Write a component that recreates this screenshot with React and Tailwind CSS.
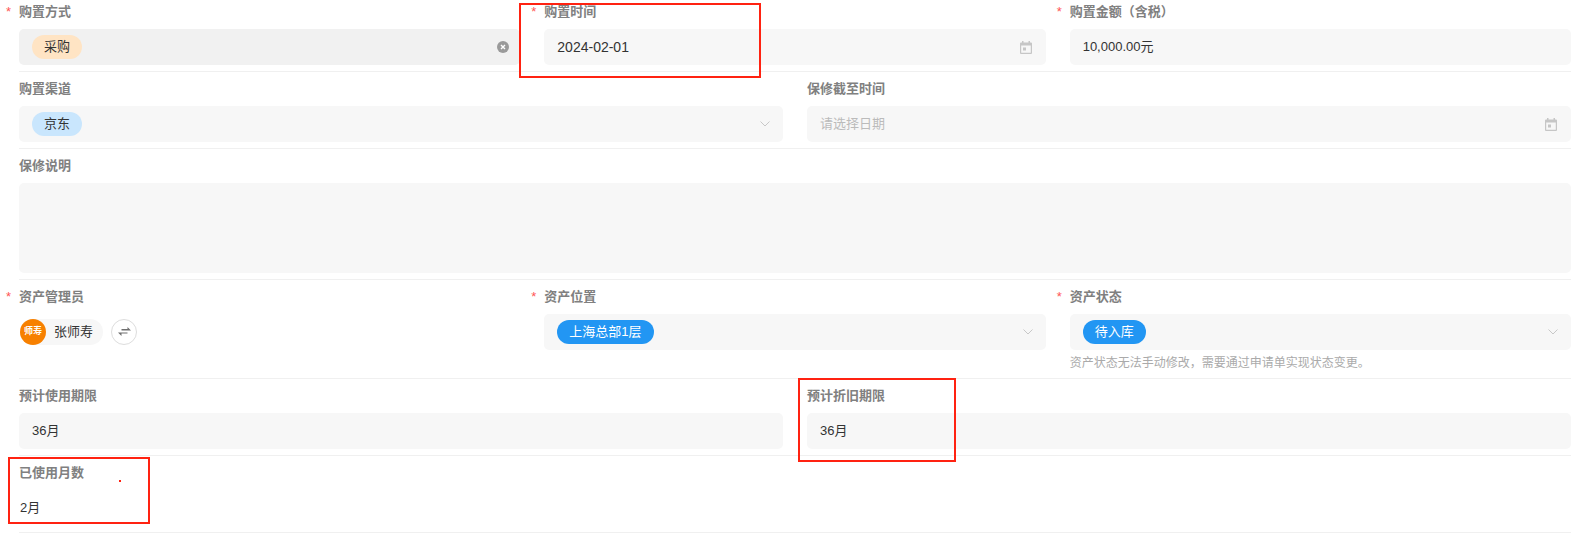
const font = { fontFamily: '"Liberation Sans", "Noto Sans CJK SC", sans-serif' };

function Label({ children, required }) {
  return (
    <div className="h-[22px] mb-[6px] flex items-center text-[13px] font-bold text-[#808080] leading-[22px]">
      {required && <span className="w-[13px] -ml-[13px] text-[#f55] text-[13px] font-normal">*</span>}
      {children}
    </div>
  );
}

function Pill({ children, className }) {
  return <span className={`h-[24px] px-[12px] rounded-full flex items-center text-[13px] ${className}`}>{children}</span>;
}

function Chevron() {
  return (
    <svg width="12" height="8" viewBox="0 0 12 8" fill="none" stroke="#c8c8c8" strokeWidth="1" className="shrink-0 mr-[12px]">
      <path d="M1.5 1.5 6 6l4.5-4.500" />
    </svg>
  );
}

function Calendar() {
  return (
    <svg width="12" height="13" viewBox="0 0 12 13" className="shrink-0 mr-[14px]">
      <path fill="#c6c6c6" d="M2 0h1.500v1.500h5V0H10v1.500h1a1 1 0 0 1 1 1V12a1 1 0 0 1-1 1H1a1 1 0 0 1-1-1V2.500a1 1 0 0 1 1-1h1zM1.200 4.500V11.800h9.600V4.500z" />
      <rect x="3" y="6.500" width="3" height="3" fill="#c6c6c6" />
    </svg>
  );
}

function Clear() {
  return (
    <svg width="12" height="12" viewBox="0 0 12 12" className="shrink-0 mr-[11px]">
      <circle cx="6" cy="6" r="6" fill="#9a9a9a" />
      <path d="M4 4l4 4M8 4l-4 4" stroke="#fff" strokeWidth="1.400" />
    </svg>
  );
}

function Field({ children, className = "bg-[#f7f7f7]" }) {
  return <div className={`h-[36px] pl-[13px] rounded-[5px] flex items-center justify-between text-[13px] text-[#333] ${className}`}>{children}</div>;
}

function Row({ cols, children }) {
  return <div className={`grid gap-x-[24px] pt-[6px] pb-[6px] border-b border-[#f0f0f0] ${cols}`}>{children}</div>;
}

const three = "grid-cols-3";
const two = "grid-cols-2";

export default function App() {
  return (
    <div style={font} className="relative h-[537px] overflow-hidden bg-white">
      <div className="pl-[19px] pr-[12px] -mt-[5px]">
        <Row cols={three}>
          <div>
            <Label required>购置方式</Label>
            <Field className="bg-[#f1f1f1]">
              <Pill className="bg-[#ffe4c4] text-[#333]">采购</Pill>
              <Clear />
            </Field>
          </div>
          <div>
            <Label required>购置时间</Label>
            <Field>
              <span className="text-[14px]">2024-02-01</span>
              <Calendar />
            </Field>
          </div>
          <div>
            <Label required>购置金额（含税）</Label>
            <Field>10,000.00元</Field>
          </div>
        </Row>

        <Row cols={two}>
          <div>
            <Label>购置渠道</Label>
            <Field>
              <Pill className="bg-[#c9e6fd] text-[#333]">京东</Pill>
              <Chevron />
            </Field>
          </div>
          <div>
            <Label>保修截至时间</Label>
            <Field>
              <span className="text-[#bbb]">请选择日期</span>
              <Calendar />
            </Field>
          </div>
        </Row>

        <div className="pt-[6px] pb-[6px] border-b border-[#f0f0f0]">
          <Label>保修说明</Label>
          <div className="h-[90px] rounded-[5px] bg-[#f7f7f7]" />
        </div>

        <Row cols={three}>
          <div>
            <Label required>资产管理员</Label>
            <div className="h-[36px] pl-px flex items-center gap-[8px]">
              <div className="h-[26px] pr-[10px] rounded-full bg-[#f7f7f7] flex items-center gap-[8px] text-[13px] text-[#333]">
                <span className="w-[26px] h-[26px] rounded-full bg-[#f78000] text-white text-[9px] font-bold flex items-center justify-center">师寿</span>
                张师寿
              </div>
              <div className="w-[26px] h-[26px] rounded-full border border-[#ddd] flex items-center justify-center">
                <svg width="13" height="10" viewBox="0 0 13 10" fill="#6f6f6f">
                  <path d="M3.500 2h6V0L13 3.500H3.500zM9.500 6.500H3.500V9L0 5.500h9.500z" />
                </svg>
              </div>
            </div>
          </div>
          <div>
            <Label required>资产位置</Label>
            <Field>
              <Pill className="bg-[#2296f3] text-white">上海总部1层</Pill>
              <Chevron />
            </Field>
          </div>
          <div>
            <Label required>资产状态</Label>
            <Field>
              <Pill className="bg-[#2296f3] text-white">待入库</Pill>
              <Chevron />
            </Field>
            <div className="h-[22px] text-[12px] leading-[26px] text-[#aaa]">资产状态无法手动修改，需要通过申请单实现状态变更。</div>
          </div>
        </Row>

        <Row cols={two}>
          <div>
            <Label>预计使用期限</Label>
            <Field>36月</Field>
          </div>
          <div>
            <Label>预计折旧期限</Label>
            <Field>36月</Field>
          </div>
        </Row>

        <div className="pt-[6px] pb-[6px] border-b border-[#f0f0f0]">
          <Label>已使用月数</Label>
          <div className="h-[36px] pl-px flex items-center text-[13px] text-[#333]">2月</div>
        </div>
      </div>

      {/* annotations drawn over the form */}
      <div className="absolute left-[519px] top-[3px] w-[242px] h-[75px] border-2 border-[#f21] pointer-events-none" />
      <div className="absolute left-[798px] top-[378px] w-[158px] h-[84px] border-2 border-[#f21] pointer-events-none" />
      <div className="absolute left-[8px] top-[457px] w-[142px] h-[67px] border-2 border-[#f21] pointer-events-none" />
      <div className="absolute left-[119px] top-[480px] w-[2px] h-[2px] bg-[#f21]" />
    </div>
  );
}
